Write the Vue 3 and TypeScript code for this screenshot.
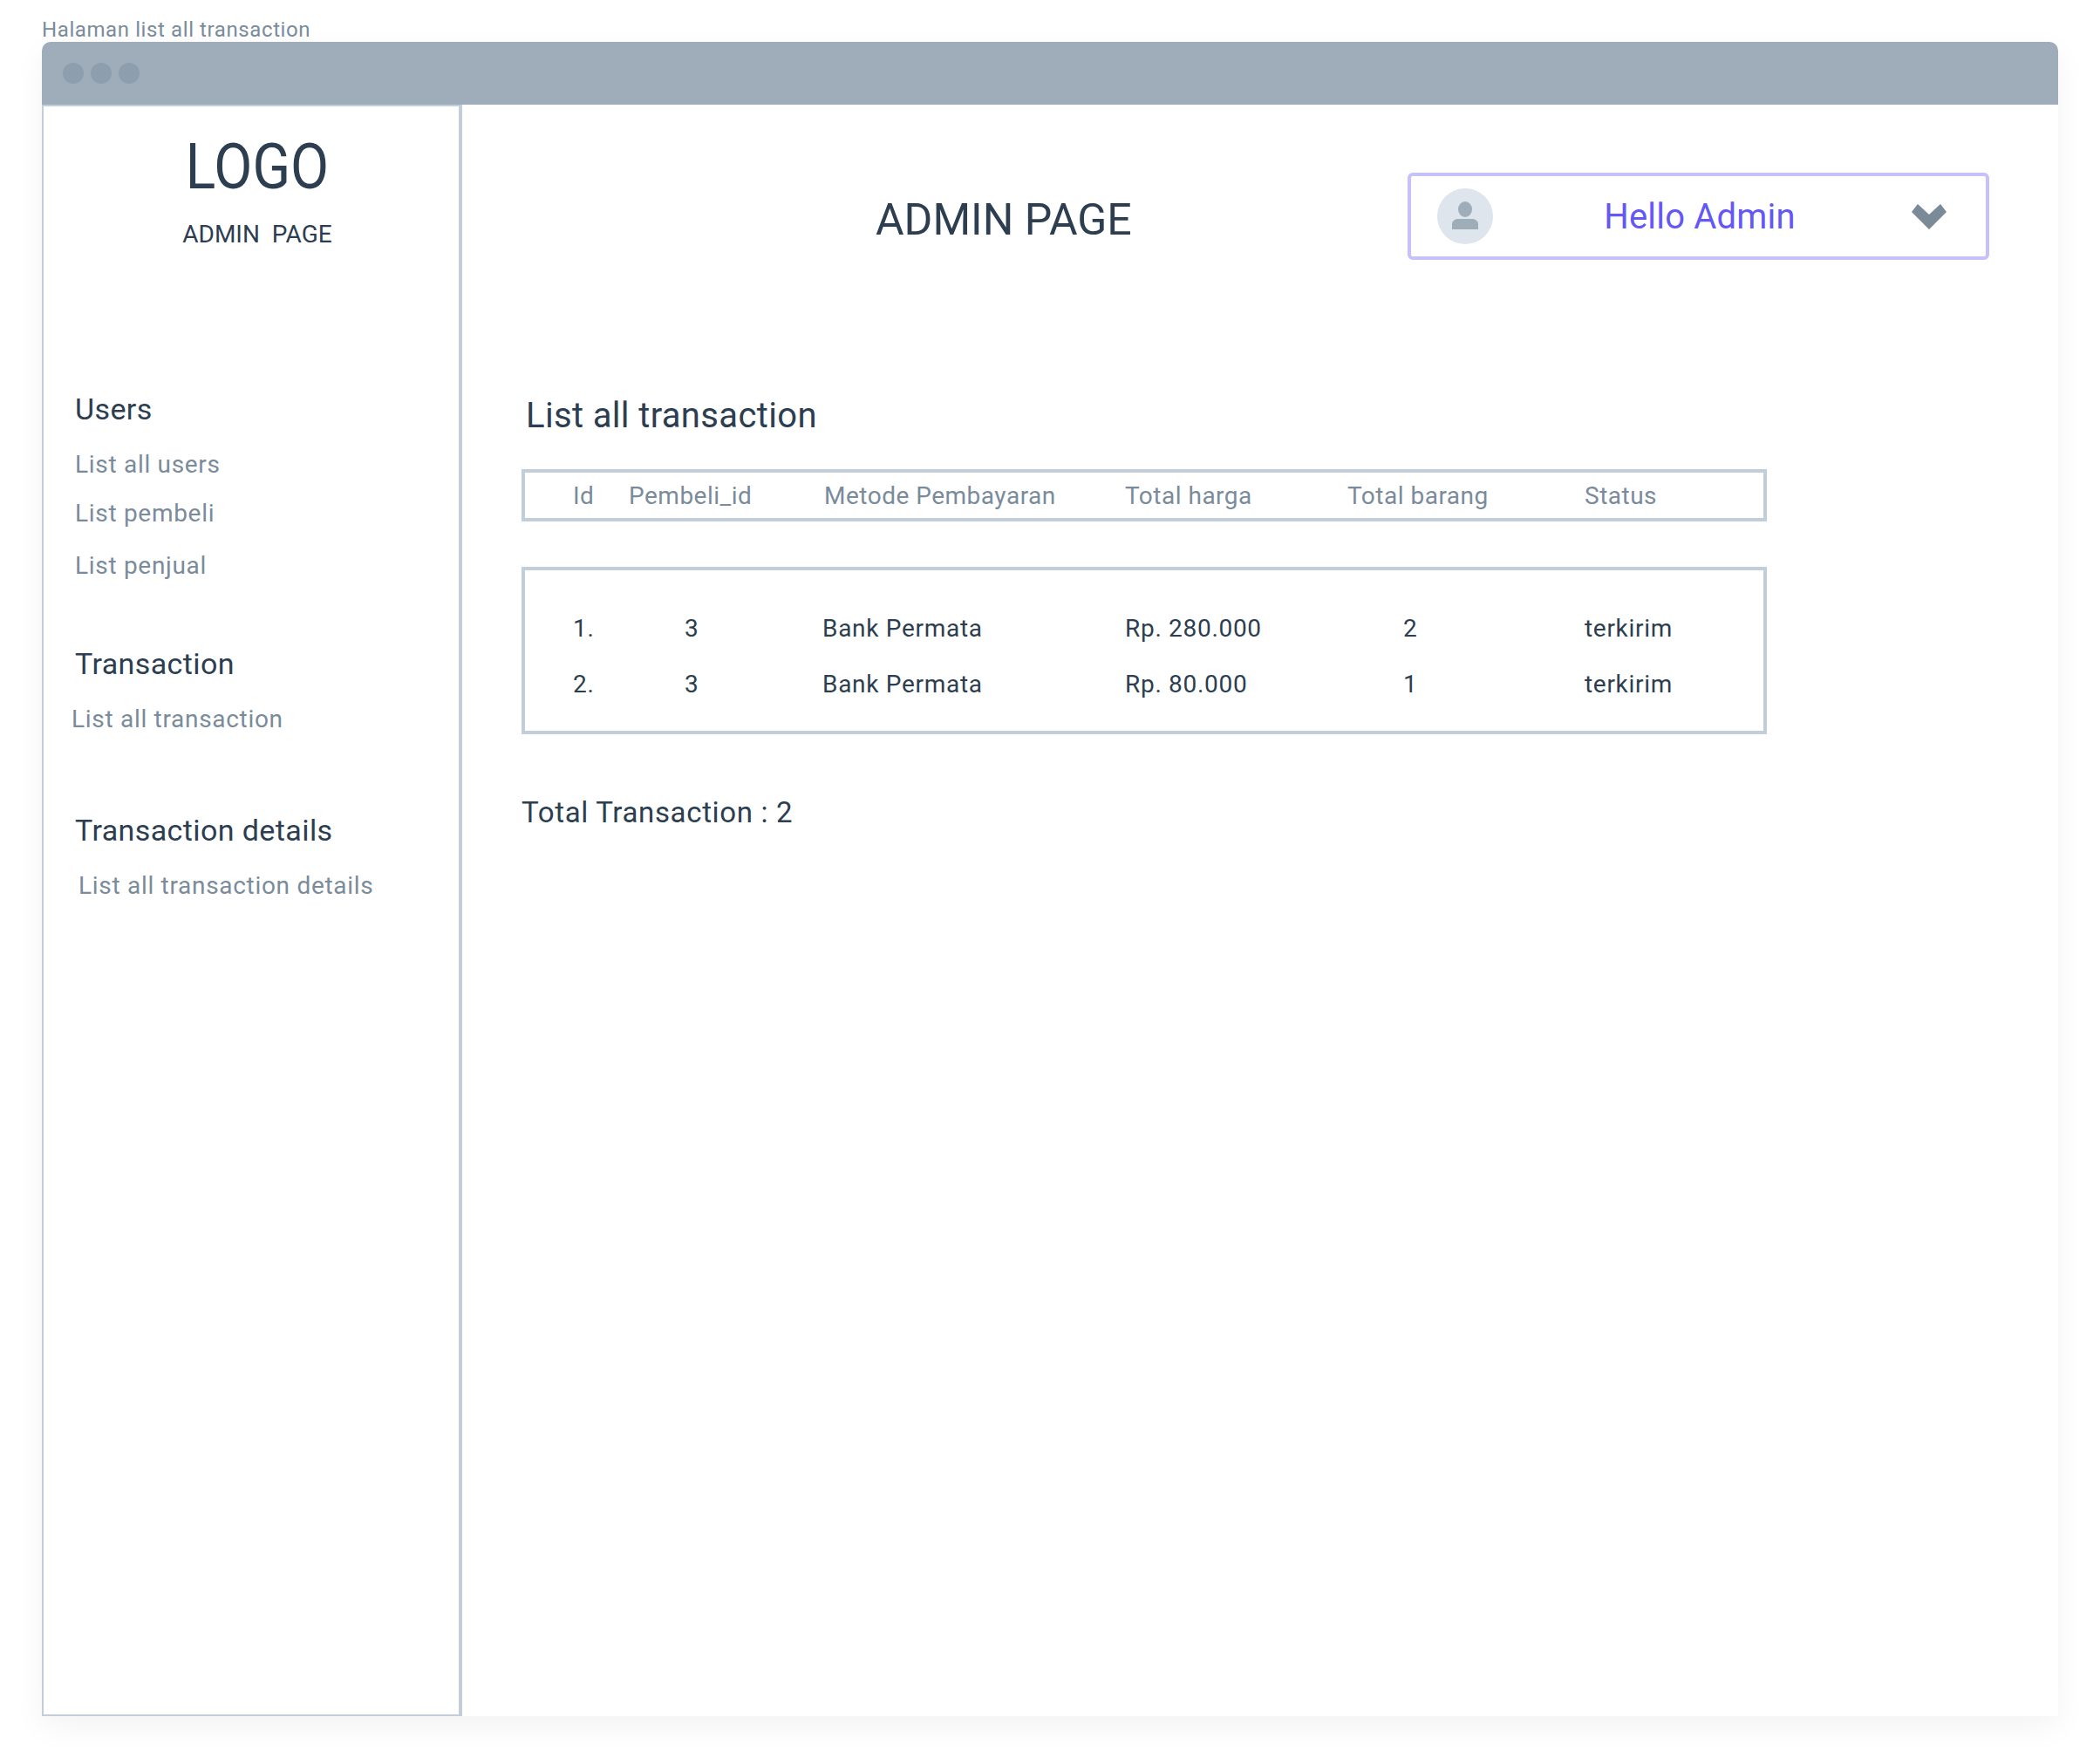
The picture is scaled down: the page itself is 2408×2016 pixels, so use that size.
<script setup lang="ts">
interface Trx {
  no: string
  buyer: string
  method: string
  total: string
  qty: string
  status: string
}

const columns = ['Id', 'Pembeli_id', 'Metode Pembayaran', 'Total harga', 'Total barang', 'Status']

const rows: Trx[] = [
  { no: '1.', buyer: '3', method: 'Bank Permata', total: 'Rp. 280.000', qty: '2', status: 'terkirim' },
  { no: '2.', buyer: '3', method: 'Bank Permata', total: 'Rp. 80.000', qty: '1', status: 'terkirim' }
]
</script>

<template>
  <div class="page">
    <div class="caption">Halaman list all transaction</div>
    <div class="window">
      <div class="titlebar">
        <span class="dot"></span>
        <span class="dot"></span>
        <span class="dot"></span>
      </div>
      <div class="body">
        <aside class="sidebar">
          <div class="brand">
            <div class="logo">LOGO</div>
            <div class="brand-sub">ADMIN&nbsp; PAGE</div>
          </div>
          <nav class="nav">
            <h3 class="nav-title nav-users">Users</h3>
            <a class="nav-link first">List all users</a>
            <a class="nav-link second">List pembeli</a>
            <a class="nav-link third">List penjual</a>
            <h3 class="nav-title nav-trx">Transaction</h3>
            <a class="nav-link first shift-left">List all transaction</a>
            <h3 class="nav-title nav-details">Transaction details</h3>
            <a class="nav-link first shift-right">List all transaction details</a>
          </nav>
        </aside>
        <main class="main">
          <header class="topbar">
            <div class="page-title">ADMIN PAGE</div>
            <div class="user-box">
              <span class="avatar">
                <svg width="32" height="34" viewBox="0 0 32 34">
                  <ellipse cx="16" cy="9" rx="8" ry="9" fill="#9fadb9" />
                  <path d="M1 32v-6c0-4 4-6 7-6h16c3 0 7 2 7 6v6z" fill="#9fadb9" />
                </svg>
              </span>
              <span class="user-name">Hello Admin</span>
              <svg class="chevron" width="40" height="29" viewBox="0 0 40 29">
                <path d="M7 0 20 12 33 0 40 9 20 29 0 9z" fill="#7b8a97" />
              </svg>
            </div>
          </header>

          <h2 class="section-title">List all transaction</h2>

          <div class="table-head cols">
            <span v-for="c in columns" :key="c">{{ c }}</span>
          </div>
          <div class="table-body">
            <div v-for="r in rows" :key="r.no" class="cols row">
              <span>{{ r.no }}</span>
              <span class="pad-buyer">{{ r.buyer }}</span>
              <span class="cell-method">{{ r.method }}</span>
              <span>{{ r.total }}</span>
              <span class="pad-qty">{{ r.qty }}</span>
              <span>{{ r.status }}</span>
            </div>
          </div>

          <div class="total">Total Transaction : 2</div>
        </main>
      </div>
    </div>
  </div>
</template>

<style>
html,
body {
  background: #fff;
}
</style>

<style scoped>
.page {
  width: 2408px;
  height: 2016px;
  padding-left: 48px;
  box-sizing: border-box;
  overflow: hidden;
  font-family: Roboto, 'Liberation Sans', sans-serif;
  color: #2c3e50;
}

.caption {
  height: 48px;
  padding-top: 20px;
  box-sizing: border-box;
  line-height: 28px;
  font-size: 24px;
  letter-spacing: 0.6px;
  color: #7a8b9b;
}

.window {
  width: 2312px;
  height: 1920px;
  background: #fff;
  border-radius: 10px 10px 0 0;
  box-shadow: 0 12px 36px rgba(0, 0, 0, 0.05);
  display: flex;
  flex-direction: column;
}

.titlebar {
  height: 72px;
  flex: none;
  background: #9eadb9;
  border-radius: 10px 10px 0 0;
  display: flex;
  align-items: center;
  gap: 8px;
  padding-left: 24px;
}

.dot {
  width: 24px;
  height: 24px;
  border-radius: 50%;
  background: #8d9eae;
}

.body {
  flex: 1;
  display: flex;
  min-height: 0;
}

.sidebar {
  width: 482px;
  flex: none;
  box-sizing: border-box;
  border: 2px solid #c2cfdb;
  border-right-width: 4px;
}

.brand {
  padding: 34px 0 0 14px;
  text-align: center;
}

.logo {
  font-size: 72px;
  line-height: 72px;
  transform: scaleX(0.89);
}

.brand-sub {
  margin-top: 25px;
  font-size: 28px;
  line-height: 32px;
}

.nav {
  display: flex;
  flex-direction: column;
  padding-left: 36px;
  margin-top: 164px;
}

.nav-title {
  margin: 0;
  font-size: 34px;
  line-height: 40px;
  font-weight: 400;
  letter-spacing: 0.4px;
}

.nav-trx {
  margin-top: 74px;
}

.nav-details {
  margin-top: 89px;
}

.nav-link {
  font-size: 28px;
  line-height: 36px;
  letter-spacing: 0.7px;
  color: #7a8b9b;
}

.first {
  margin-top: 26px;
}

.second {
  margin-top: 20px;
}

.third {
  margin-top: 24px;
}

.shift-left {
  margin-left: -4px;
}

.shift-right {
  margin-left: 4px;
}

.main {
  flex: 1;
  min-width: 0;
  padding: 78px 79px 0 68px;
}

.topbar {
  display: flex;
  align-items: center;
  height: 100px;
}

.page-title {
  margin-left: 406px;
  padding-top: 8px;
  font-size: 50px;
}

.user-box {
  margin-left: auto;
  width: 667px;
  height: 100px;
  box-sizing: border-box;
  border: 4px solid #c6c0fb;
  border-radius: 6px;
  display: flex;
  align-items: center;
  padding: 0 45px 0 30px;
}

.avatar {
  width: 64px;
  height: 64px;
  flex: none;
  border-radius: 50%;
  background: #dfe5ec;
  display: flex;
  align-items: center;
  justify-content: center;
}

.user-name {
  flex: 1;
  padding-right: 6px;
  text-align: center;
  font-size: 40px;
  letter-spacing: 0.2px;
  color: #6457f5;
}

.chevron {
  flex: none;
}

.section-title {
  margin: 155px 0 0 5px;
  font-size: 40px;
  line-height: 48px;
  font-weight: 400;
  letter-spacing: 0.35px;
}

.cols {
  display: grid;
  grid-template-columns: 64px 224px 345px 255px 272px 1fr;
  padding-left: 55px;
  font-size: 28px;
  line-height: 32px;
  letter-spacing: 0.7px;
}

.table-head {
  margin: 37px 0 0;
  width: 1428px;
  box-sizing: border-box;
  border: 4px solid #c2cfdb;
  padding-top: 11px;
  padding-bottom: 9px;
  letter-spacing: 0.5px;
  color: #7a8b9b;
}

.table-body {
  margin: 52px 0 0;
  width: 1428px;
  box-sizing: border-box;
  border: 4px solid #c2cfdb;
  padding: 51px 0 37px;
}

.row + .row {
  margin-top: 32px;
}

.cell-method {
  margin-left: -2px;
}

.pad-buyer {
  padding-left: 64px;
}

.pad-qty {
  padding-left: 64px;
}

.total {
  margin: 70px 0 0;
  font-size: 33px;
  line-height: 40px;
  letter-spacing: 0.65px;
}
</style>
